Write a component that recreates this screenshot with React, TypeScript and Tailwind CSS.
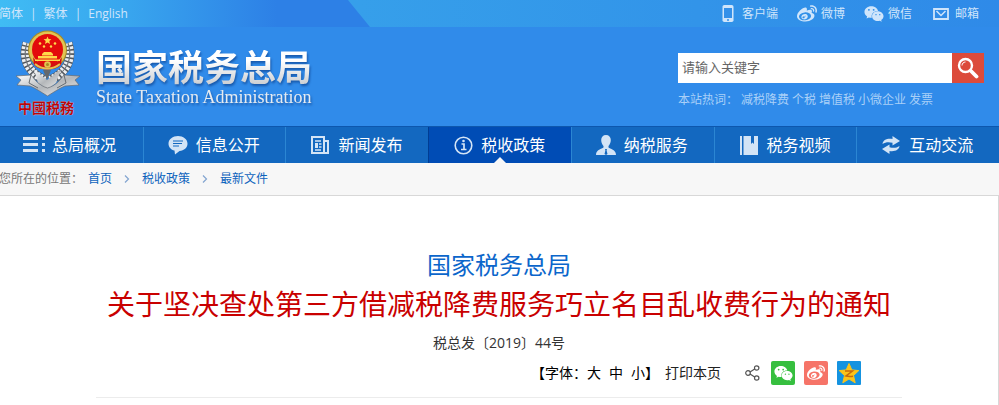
import type { ReactNode } from "react";
import { FaWeibo, FaWeixin } from "react-icons/fa";

interface NavItem {
  label: string;
  icon: ReactNode;
  active?: boolean;
}

const hotWords = ["减税降费", "个税", "增值税", "小微企业", "发票"];

const crumbs = ["首页", "税收政策", "最新文件"];

const quickLinks = [
  { label: "客户端", icon: <PhoneIcon /> },
  { label: "微博", icon: <FaWeibo size={20} /> },
  { label: "微信", icon: <FaWeixin size={20} /> },
  { label: "邮箱", icon: <MailIcon /> },
];

const navItems: NavItem[] = [
  {
    label: "总局概况",
    icon: (
      <svg width="24" height="18" viewBox="0 0 24 18" fill="currentColor">
        <path d="M1 1h15v3H1zM1 7h15v3H1zM1 13h15v3H1zM20 1h3v3h-3zM20 7h3v3h-3zM20 13h3v3h-3z" />
      </svg>
    ),
  },
  {
    label: "信息公开",
    icon: (
      <svg width="20" height="20" viewBox="0 0 20 20">
        <path
          d="M10 1c5.200 0 9.500 3.200 9.500 7.700 0 4-3.500 6.800-8 7.400L7 19.500 6.500 15.600C3 14.700.5 12 .5 8.700.5 4.200 4.800 1 10 1z"
          fill="currentColor"
        />
        <path d="M5 6h10M5 8.500h9M5 11h6" stroke="#1368c0" strokeWidth="1" />
      </svg>
    ),
  },
  {
    label: "新闻发布",
    icon: (
      <svg width="18" height="18" viewBox="0 0 18 18" fill="none" stroke="currentColor" strokeWidth="2">
        <path d="M1 1h12v16H1zM13 5h4v12h-4" />
        <path d="M4 5h6M4 14h6" strokeWidth="1.500" />
        <path d="M4 7h3v5H4z" fill="currentColor" stroke="none" />
        <path d="M8 8h2.500M8 11h2.500" strokeWidth="1.500" />
      </svg>
    ),
  },
  {
    label: "税收政策",
    active: true,
    icon: (
      <svg width="19" height="19" viewBox="0 0 19 19" fill="none" stroke="currentColor">
        <circle cx="9.500" cy="9.500" r="8.300" strokeWidth="1.600" />
        <path d="M7.500 8H10v5.500M7 13.500h5.500" strokeWidth="1.700" />
        <circle cx="9.500" cy="5" r="1.300" fill="currentColor" stroke="none" />
      </svg>
    ),
  },
  {
    label: "纳税服务",
    icon: (
      <svg width="22" height="20" viewBox="0 0 22 20">
        <path
          d="M11 0c3 0 4.800 2 4.800 5 0 2.800-1.200 4.800-2.300 6v1.600c1.500 1.500 7.500 1.900 7.500 7.400H1c0-5.500 6-5.900 7.500-7.400V11C7.400 9.800 6.200 7.800 6.200 5c0-3 1.800-5 4.800-5z"
          fill="currentColor"
        />
        <path d="M10 14h2l-.4 1.500.9 3.500L11 20l-1.500-1 .9-3.500z" fill="#1368c0" />
      </svg>
    ),
  },
  {
    label: "税务视频",
    icon: (
      <svg width="18" height="19" viewBox="0 0 18 19" fill="currentColor">
        <path d="M0 0h2v19H0zM3.500 0H11v8l1.500-1.500L14 8V0h4v19H3.500z" />
      </svg>
    ),
  },
  {
    label: "互动交流",
    icon: (
      <svg width="18" height="18" viewBox="0 0 18 18" fill="currentColor">
        <path d="M.5 8C1 4 5 2.200 10.500 3V0L18 5l-7.500 4.500V6.700C6.500 5.800 3.500 6 .5 8z" />
        <path d="M17.500 10c-.5 4-4.500 5.800-10 5v3L0 13l7.500-4.500v2.800c4 .9 7 .7 10-1.300z" />
      </svg>
    ),
  },
];

function PhoneIcon() {
  return (
    <svg width="12" height="17" viewBox="0 0 12 17">
      <rect x=".5" width="11" height="17" rx="1.800" fill="currentColor" />
      <path d="M2 3h8v10H2z" fill="#3390e9" />
      <circle cx="6" cy="15" r="1" fill="#3390e9" />
    </svg>
  );
}

function MailIcon() {
  return (
    <svg width="16" height="12" viewBox="0 0 16 12" fill="none" stroke="currentColor">
      <path d="M1 1h14v10H1z" strokeWidth="1.800" />
      <path d="M3.500 3L8 7.500 12.500 3" strokeWidth="1.500" />
    </svg>
  );
}

function Emblem() {
  return (
    <svg width="64" height="68" viewBox="0 0 64 68" aria-hidden="true">
      <defs>
        <linearGradient id="silver" x1="0" y1="0" x2="1" y2="1">
          <stop offset="0" stopColor="#fff" />
          <stop offset=".5" stopColor="#b4b7ba" />
          <stop offset="1" stopColor="#f0f0f0" />
        </linearGradient>
      </defs>
      {/* wheat ears */}
      <g fill="none">
        <path d="M11 13C6 28 11 42 29 50M52 13c5 15 0 29-18 37" stroke="#53585e" strokeWidth="9" />
        <path
          d="M11 13C6 28 11 42 29 50M52 13c5 15 0 29-18 37"
          stroke="#eceef0"
          strokeWidth="8"
          strokeDasharray="2.500 1.500"
        />
        <path d="M11 13C6 28 11 42 29 50M52 13c5 15 0 29-18 37" stroke="#70757a" strokeWidth="1.200" />
      </g>
      <path d="M18 39l13 11 14-11-5 14-9 7-9-7z" fill="url(#silver)" />
      <path d="M27 40l4 10 4-10z" fill="#64696e" />
      {/* gear and national emblem */}
      <circle cx="31.500" cy="20" r="19.500" fill="#a88b22" />
      <circle cx="31.500" cy="20" r="18.500" fill="#e2c452" />
      <circle cx="31.500" cy="19.500" r="15.500" fill="#e30b0b" />
      <path d="M17 27c4 9 25 9 29 0l-1 8c-6 6-21 6-27 0z" fill="#d41010" />
      <path d="M19 34c7 6 18 6 25 0" stroke="#e2c452" strokeWidth="2" fill="none" />
      <path
        d="M31.500 6.500l1.100 2.600 2.800.2-2.100 1.800.7 2.800-2.500-1.500-2.500 1.500.7-2.800-2.100-1.800 2.800-.2z"
        fill="#ffd94a"
      />
      <g fill="#ffd94a">
        <circle cx="24" cy="13.500" r="1.300" />
        <circle cx="28" cy="16.500" r="1.200" />
        <circle cx="35" cy="16.500" r="1.200" />
        <circle cx="39" cy="13.500" r="1.300" />
        <path d="M26 24l2-2h7l2 2v1.500H26zM22 26h19v2.500H22zM19 29.500h25V31H19z" />
      </g>
      <circle cx="31.500" cy="34.500" r="3.300" fill="#e2c452" />
      <circle cx="31.500" cy="34.500" r="1.500" fill="#a88b22" />
      {/* ribbon */}
      <path
        d="M0 46l15-1 5 6c4 4 8 6 11.500 7C35 57 39 55 43 51l5-6 16 1-5 4 4 5-14 1c-5 2-11 6-17.500 10C25 62 19 58 14 56L1 55l4-5z"
        fill="url(#silver)"
        stroke="#676c71"
        strokeWidth=".7"
      />
      <path d="M15 45l-2 8 9 5M48 45l2 8-9 5" fill="none" stroke="#676c71" />
    </svg>
  );
}

function ShareIcon() {
  return (
    <svg width="15" height="16" viewBox="0 0 15 16" fill="none" stroke="#555" strokeWidth="1.200">
      <circle cx="3" cy="8" r="2.300" />
      <circle cx="11.700" cy="3" r="2.200" />
      <circle cx="11.700" cy="13" r="2.200" />
      <path d="M5 7l4.700-3M5 9l4.700 3" />
    </svg>
  );
}

function QzoneIcon() {
  return (
    <svg width="24" height="24" viewBox="0 0 24 24">
      <rect width="24" height="24" rx="1" fill="#1593e0" />
      <path
        d="M12 2.500l2.800 6.400 7 .7-5.300 4.900 1.700 7.300L12 18l-6.200 3.800 1.700-7.300-5.300-4.900 7-.7z"
        fill="#fcc419"
        stroke="#fcc419"
        strokeLinejoin="round"
      />
      <path d="M8 10h7.500L9 15c2.500.6 4.700.6 7 .2" fill="none" stroke="#c9690c" strokeWidth="1.500" />
    </svg>
  );
}

function TopBar() {
  return (
    <div className="relative flex h-[27px] items-center justify-between bg-linear-to-r from-[#369fea] from-36% to-[#2f8ae8] text-xs text-[#cfe5fb]">
      <svg
        className="absolute top-0 left-0 h-full w-[370px]"
        viewBox="0 0 370 27"
        preserveAspectRatio="none"
        aria-hidden="true"
      >
        <defs>
          <linearGradient id="corner" x1="0" x2="1">
            <stop offset="0" stopColor="#40bcf4" />
            <stop offset=".35" stopColor="#38a5ee" />
            <stop offset=".75" stopColor="#2d80e6" />
            <stop offset="1" stopColor="#2d80e6" />
          </linearGradient>
        </defs>
        <path d="M0 0h348l22 27H0z" fill="url(#corner)" />
      </svg>
      <div className="relative -ml-px flex gap-[7px]">
        <a href="#">简体</a>
        <span>|</span>
        <a href="#">繁体</a>
        <span>|</span>
        <a href="#">English</a>
      </div>
      <div className="relative mr-5 flex gap-[19px]">
        {quickLinks.map((link) => (
          <a key={link.label} href="#" className="flex items-center gap-1">
            <span className="flex w-5 justify-center">{link.icon}</span>
            {link.label}
          </a>
        ))}
      </div>
    </div>
  );
}

function SearchBox() {
  return (
    <div className="mt-[26px] mr-[15px] w-[306px]">
      <form className="flex h-[30px]" onSubmit={(e) => e.preventDefault()}>
        <input
          type="text"
          aria-label="请输入关键字"
          placeholder="请输入关键字"
          className="min-w-0 flex-1 bg-white px-1 text-[13px] text-[#333] outline-none placeholder:text-[#666]"
        />
        <button type="submit" aria-label="搜索" className="flex w-8 items-center justify-center bg-[#dc4b3b]">
          <svg width="22" height="22" viewBox="0 0 22 22" fill="none" stroke="#fff">
            <circle cx="8.500" cy="8.500" r="6.500" strokeWidth="2.400" />
            <path d="M14 14l5.500 5.500" strokeWidth="3.800" strokeLinecap="round" />
            <path d="M5 8.500C5 6.500 6.500 5 8.500 5" strokeWidth="1" />
          </svg>
        </button>
      </form>
      <div className="mt-[9px] flex gap-[3px] text-xs text-[#a9d0f8]">
        <span>本站热词：</span>
        {hotWords.map((word) => (
          <a key={word} href="#">
            {word}
          </a>
        ))}
      </div>
    </div>
  );
}

function Header() {
  return (
    <header className="bg-[#308bea]">
      <TopBar />
      <div className="flex h-[99px] items-start justify-between">
        <a href="#" className="flex pl-4">
          <span className="flex flex-col items-center pt-[3px]">
            <Emblem />
            <span className="-ml-1 font-bold text-sm text-[#b8060b] text-shadow-[0_0_1px_#fff]">中國税務</span>
          </span>
          <span className="flex flex-col gap-px pt-[23px] pl-4 drop-shadow-[1px_2px_1px_rgba(0,40,110,0.5)]">
            <span className="bg-linear-to-b from-white from-30% to-[#c8ccd0] bg-clip-text text-4xl leading-9 font-bold text-transparent">
              国家税务总局
            </span>
            <span className="font-['Liberation_Serif',serif] text-lg leading-5 text-[#e6ebf0]">
              State Taxation Administration
            </span>
          </span>
        </a>
        <SearchBox />
      </div>
    </header>
  );
}

function MainNav() {
  return (
    <nav className="grid grid-cols-7 border-t border-[#0d57ae] bg-[#1368c0]">
      {navItems.map((item) => (
        <a
          key={item.label}
          href="#"
          className={`relative flex h-9 items-center gap-1 border-l pl-5 text-base text-white first:border-l-0 ${
            item.active ? "border-[#003d94] bg-[#004cb5]" : "border-[#2b86d3]"
          }`}
        >
          <span className="flex w-7 justify-center text-[#d3e4f6]">{item.icon}</span>
          {item.label}
          {item.active && (
            <svg className="absolute bottom-0 left-1/2 -translate-x-1/2" width="12" height="6" viewBox="0 0 12 6">
              <path d="M0 6l6-6 6 6z" fill="#f7f7f7" />
            </svg>
          )}
        </a>
      ))}
    </nav>
  );
}

function Breadcrumb() {
  return (
    <div className="flex h-8 items-center bg-[#f7f7f7] text-xs text-[#0d63bd]">
      <span className="-ml-px mr-[5px] text-[#777]">您所在的位置：</span>
      <div className="flex items-center gap-3">
        {crumbs.map((crumb, i) => (
          <div key={crumb} className="flex items-center gap-3">
            {i > 0 && (
              <svg width="6" height="8" viewBox="0 0 6 8" fill="none" stroke="#83a5d0">
                <path d="M1 .5L4.500 4 1 7.500" strokeWidth="1.200" />
              </svg>
            )}
            <a href="#">{crumb}</a>
          </div>
        ))}
      </div>
    </div>
  );
}

function ArticleTools() {
  return (
    <div className="flex h-6 items-center justify-end pr-[41px] text-sm text-[#222]">
      <div className="flex items-center text-black">
        <span>【字体：</span>
        <span className="flex gap-2">
          <button type="button">大</button>
          <button type="button">中</button>
          <button type="button">小</button>
        </span>
        <span>】</span>
      </div>
      <button type="button" className="ml-1.5">
        打印本页
      </button>
      <button type="button" aria-label="分享" className="mr-[11px] ml-6">
        <ShareIcon />
      </button>
      <div className="flex gap-[9px] text-white">
        <a href="#" aria-label="微信" className="flex size-6 items-center justify-center rounded-xs bg-[#36bf3f]">
          <FaWeixin size={19} />
        </a>
        <a href="#" aria-label="微博" className="flex size-6 items-center justify-center rounded-xs bg-[#f67468]">
          <FaWeibo size={18} />
        </a>
        <a href="#" aria-label="QQ空间">
          <QzoneIcon />
        </a>
      </div>
    </div>
  );
}

export default function App() {
  return (
    <div className="flex min-h-screen flex-col bg-white font-['Open_Sans','Noto_Sans_CJK_SC',sans-serif]">
      <Header />
      <MainNav />
      <Breadcrumb />
      <main className="flex-1 border-t border-r border-[#d8d8d8] pt-[51px]">
        <article className="mx-24 border-b border-[#ececec] pb-3">
          <div className="text-center">
            <p className="text-2xl leading-9 text-[#0b66cb]">国家税务总局</p>
            <h1 className="text-[28px] leading-[42px] text-[#c90000]">
              关于坚决查处第三方借减税降费服务巧立名目乱收费行为的通知
            </h1>
            <p className="text-sm leading-9 text-[#333]">税总发〔2019〕44号</p>
          </div>
          <ArticleTools />
        </article>
      </main>
    </div>
  );
}
